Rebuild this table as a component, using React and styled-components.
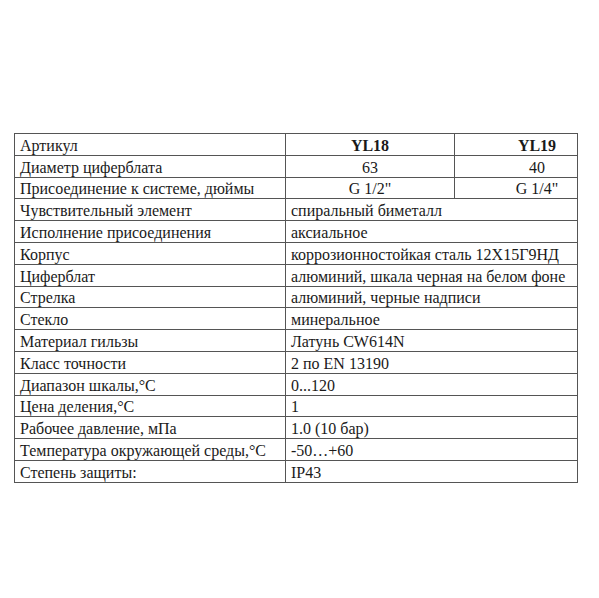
import styled, { createGlobalStyle } from 'styled-components';

const GlobalStyle = createGlobalStyle`
  html, body {
    margin: 0;
    padding: 0;
    background: #ffffff;
  }
`;

const Page = styled.div`
  width: 599px;
  height: 598px;
  padding: 133px 0 0 14px;
  box-sizing: border-box;
`;

const Table = styled.table`
  width: 563px;
  border-collapse: collapse;
  table-layout: fixed;
  font-family: 'Liberation Serif', 'Times New Roman', serif;
  font-size: 16px;
  color: #1a1a1a;
`;

const Cell = styled.td`
  height: 19.8px;
  padding: 1px 5px 0 5px;
  border: 1.5px solid #555;
  white-space: nowrap;
  overflow: hidden;
  line-height: 18px;
  vertical-align: bottom;
  text-align: ${p => (p.$center ? 'center' : 'left')};
  font-weight: ${p => (p.$bold ? 'bold' : 'normal')};
  padding-left: ${p => (p.$shift ? '47px' : '5px')};
`;

const specs = [
  ['Чувствительный элемент', 'спиральный биметалл'],
  ['Исполнение присоединения', 'аксиальное'],
  ['Корпус', 'коррозионностойкая сталь 12Х15Г9НД'],
  ['Циферблат', 'алюминий, шкала черная на белом фоне'],
  ['Стрелка', 'алюминий, черные надписи'],
  ['Стекло', 'минеральное'],
  ['Материал гильзы', 'Латунь CW614N'],
  ['Класс точности', '2 по EN 13190'],
  ['Диапазон шкалы,°С', '0...120'],
  ['Цена деления,°С', '1'],
  ['Рабочее давление, мПа', '1.0 (10 бар)'],
  ['Температура окружающей среды,°С', '-50…+60'],
  ['Степень защиты:', 'IP43'],
];

const models = [
  ['Артикул', 'YL18', 'YL19', true],
  ['Диаметр циферблата', '63', '40', false],
  ['Присоединение к системе, дюймы', 'G 1/2"', 'G 1/4"', false],
];

export default function App() {
  return (
    <Page>
      <GlobalStyle />
      <Table>
        <colgroup>
          <col style={{ width: 271 }} />
          <col style={{ width: 169 }} />
          <col style={{ width: 123 }} />
        </colgroup>
        <tbody>
          {models.map(([name, a, b, bold]) => (
            <tr key={name}>
              <Cell>{name}</Cell>
              <Cell $center $bold={bold}>{a}</Cell>
              <Cell $center $bold={bold} $shift>{b}</Cell>
            </tr>
          ))}
          {specs.map(([name, value]) => (
            <tr key={name}>
              <Cell>{name}</Cell>
              <Cell colSpan={2}>{value}</Cell>
            </tr>
          ))}
        </tbody>
      </Table>
    </Page>
  );
}
